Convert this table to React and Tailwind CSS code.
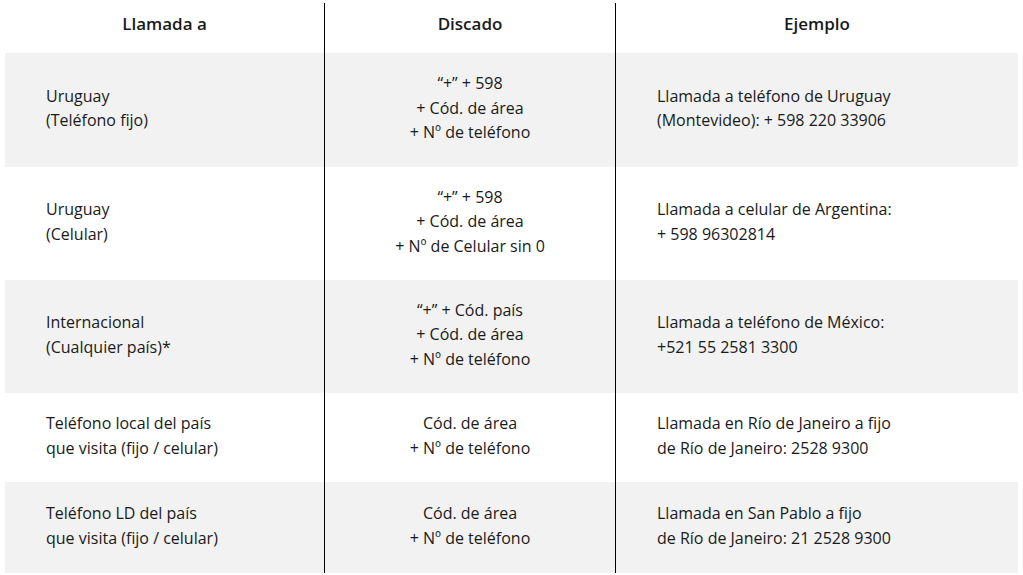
const rows = [
  {
    a: ["Uruguay", "(Teléfono fijo)"],
    d: ["“+” + 598", "+ Cód. de área", "+ Nº de teléfono"],
    e: ["Llamada a teléfono de Uruguay", "(Montevideo): + 598 220 33906"],
    h: "h-[114px]",
    gray: true,
  },
  {
    a: ["Uruguay", "(Celular)"],
    d: ["“+” + 598", "+ Cód. de área", "+ Nº de Celular sin 0"],
    e: ["Llamada a celular de Argentina:", "+ 598 96302814"],
    h: "h-[113px]",
    gray: false,
  },
  {
    a: ["Internacional", "(Cualquier país)*"],
    d: ["“+” + Cód. país", "+ Cód. de área", "+ Nº de teléfono"],
    e: ["Llamada a teléfono de México:", "+521 55 2581 3300"],
    h: "h-[113px]",
    gray: true,
  },
  {
    a: ["Teléfono local del país", "que visita (fijo / celular)"],
    d: ["Cód. de área", "+ Nº de teléfono"],
    e: ["Llamada en Río de Janeiro a fijo", "de Río de Janeiro: 2528 9300"],
    h: "h-[89px]",
    gray: false,
  },
  {
    a: ["Teléfono LD del país", "que visita (fijo / celular)"],
    d: ["Cód. de área", "+ Nº de teléfono"],
    e: ["Llamada en San Pablo a fijo", "de Río de Janeiro: 21 2528 9300"],
    h: "h-[91px]",
    gray: true,
  },
];

function Lines({ items }) {
  return items.map((t, i) => <div key={i}>{t}</div>);
}

export default function App() {
  return (
    <div
      className="h-[575px] w-[1023px] bg-white px-[5px] pt-[3px] text-[16px] leading-[24.5px] text-[#1a1a1a]"
      style={{ fontFamily: '"Open Sans", "Noto Sans", sans-serif' }}
    >
      <div className="grid grid-cols-[320px_291px_1fr]">
        {/* header */}
        <div className="flex h-[50px] items-center justify-center border-r border-black pb-[8px] text-[17px] font-semibold">
          Llamada a
        </div>
        <div className="flex h-[50px] items-center justify-center border-r border-black pb-[8px] text-[17px] font-semibold">
          Discado
        </div>
        <div className="flex h-[50px] items-center justify-center pb-[8px] text-[17px] font-semibold">
          Ejemplo
        </div>

        {rows.map((r, i) => {
          const bg = r.gray ? "bg-[#f2f2f2]" : "bg-white";
          return [
            <div
              key={`a${i}`}
              className={`flex ${r.h} flex-col justify-center border-r border-black pb-[4px] pl-[41px] ${bg}`}
            >
              <Lines items={r.a} />
            </div>,
            <div
              key={`d${i}`}
              className={`flex ${r.h} flex-col justify-center border-r border-black pb-[4px] text-center ${bg}`}
            >
              <Lines items={r.d} />
            </div>,
            <div
              key={`e${i}`}
              className={`flex ${r.h} flex-col justify-center pb-[4px] pl-[41px] ${bg}`}
            >
              <Lines items={r.e} />
            </div>,
          ];
        })}
      </div>
    </div>
  );
}
